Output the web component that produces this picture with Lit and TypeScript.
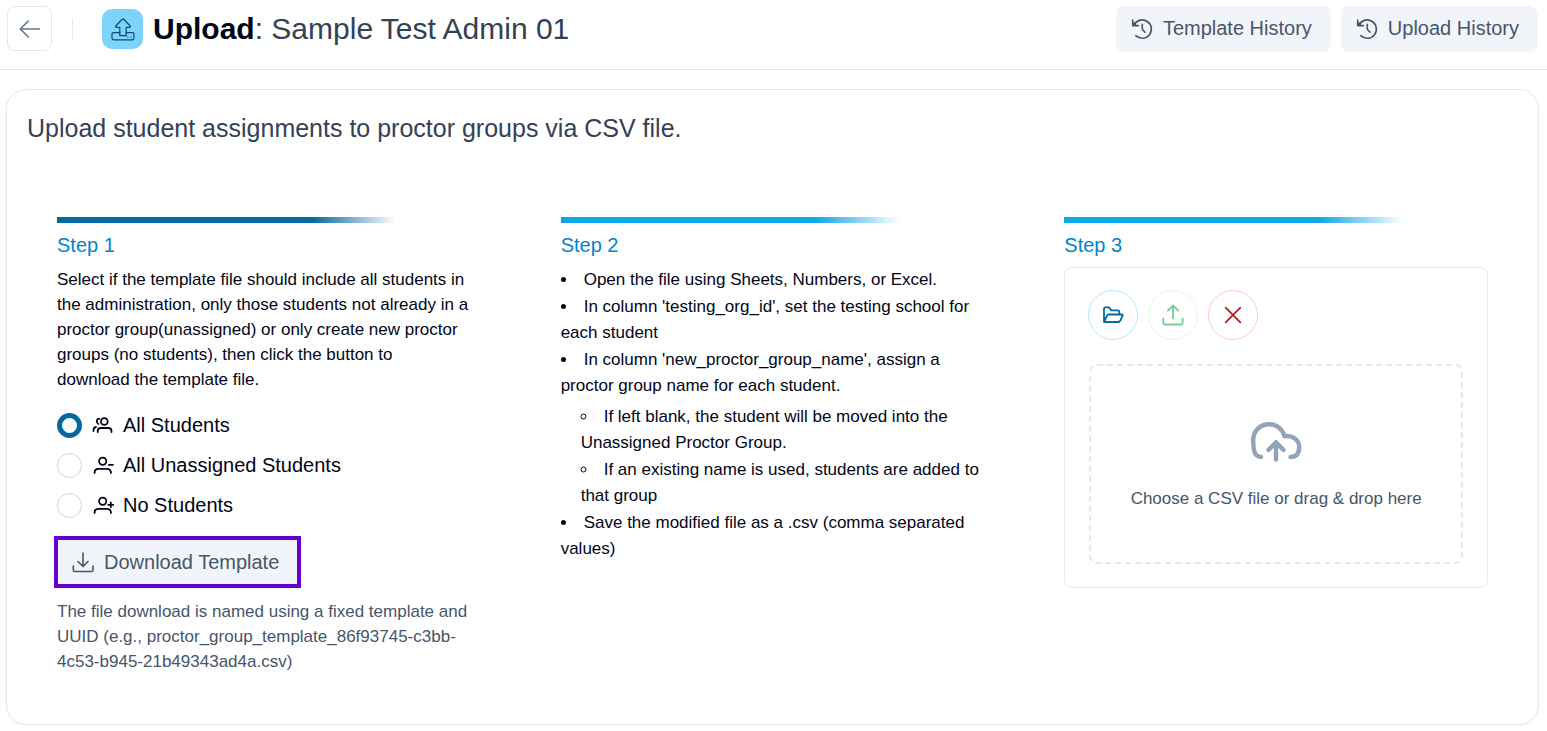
import { LitElement, html, css, svg } from "lit";
import { customElement, state } from "lit/decorators.js";

const icons = {
  back: svg`<svg width="22" height="20" viewBox="0 0 22 20"><path d="M20.300 10H1.500M9.300 2 1.300 10 9.300 18"/></svg>`,
  tray: svg`<svg width="24" height="24" viewBox="0 0 24 24"><path d="M8.800 18.700V10.300H5.300Q4 10 4.800 9L11 2.500Q12 1.500 13 2.500L19.200 9Q20 10 18.700 10.300H15.200V18.700Z"/><path d="M8.800 15.700H2.500Q1 15.700 1 17.200V21.300Q1 22.800 2.500 22.800H21.500Q23 22.800 23 21.300V17.200Q23 15.700 21.500 15.700H15.200"/><path d="M16.700 20h.4M20 20h.4"/></svg>`,
  history: svg`<svg width="22" height="22" viewBox="0 0 22 22"><path d="M3.200 6.500A9.200 9.200 0 1 1 4.800 17.700"/><path d="M1.700 2V7.600H7.500M2.200 7.200 4.500 4.800M1.800 4.500 4.500 7"/><path d="M11.300 6.200V11.200L14 14.200"/></svg>`,
  download: svg`<svg width="22" height="22" viewBox="0 0 22 22"><path d="M11 2V15M6 10.500 11 15.500 16 10.500M1.300 15V19Q1.300 20.500 2.800 20.500H19.500Q21 20.500 21 19V15"/></svg>`,
  upload: svg`<svg width="22" height="22" viewBox="0 0 22 22"><path d="M11 14.500V1.500M6 6.500 11 1.500 16 6.500M1.300 14.500V18.500Q1.300 20.500 3 20.500H19Q20.700 20.500 20.700 18.500V14.500"/></svg>`,
  folder: svg`<svg width="22" height="22" viewBox="0 0 22 22"><path d="M2 18V5.200Q2 3.400 3.500 3.400H6.300Q7.300 3.400 8 4.400L9.300 6.400H15.700Q17.300 6.400 17.300 8V10.500M2 18 5 11.700Q5.600 10.500 6.700 10.500H19.700Q21.200 10.500 20.600 11.700L18.200 16.800Q17.500 18 16.300 18Z"/></svg>`,
  close: svg`<svg width="18" height="18" viewBox="0 0 18 18"><path d="M1.700 1.700 16.300 16.300M16.300 1.700 1.700 16.300"/></svg>`,
  cloud: svg`<svg width="52" height="42" viewBox="0 0 52 42"><path d="M11 36C5 35.500 3.200 31 3.200 19C3.200 9.500 10.500 3.200 19 3.200C26.500 3.200 32.500 8 34.500 15.200C42.500 13.800 49.200 19 49.200 26C49.200 32.500 46.500 36 40.500 36"/><path d="M26 38.500V21.500M18.500 29 26 21.200 33.500 29"/></svg>`,
  all: svg`<svg width="22" height="20" viewBox="0 0 22 20"><circle cx="12.300" cy="6.500" r="3.400"/><path d="M5.700 17V16.300Q5.700 13 9 13H16.200Q19.500 13 19.500 16.300V17M7.300 3.800Q4.800 3.500 4.800 6.300 4.800 8.300 6.500 9M1.500 16V15.300Q1.500 12.500 4 12"/></svg>`,
  minus: svg`<svg width="22" height="20" viewBox="0 0 22 20"><circle cx="10.700" cy="6.300" r="3.600"/><path d="M2.600 18V17.200Q2.900 13.800 6.300 13.800H15Q18.500 13.800 18.900 17.200V18M16.800 9.800H21"/></svg>`,
  plus: svg`<svg width="22" height="20" viewBox="0 0 22 20"><circle cx="10.700" cy="6.300" r="3.600"/><path d="M2.600 18V17.200Q2.900 13.800 6.300 13.800H15Q18.500 13.800 18.900 17.200V18M16.300 9.800H21.300M18.800 7.300V12.300"/></svg>`,
};

const scopes = [
  { id: "all", label: "All Students", icon: icons.all },
  { id: "unassigned", label: "All Unassigned Students", icon: icons.minus },
  { id: "none", label: "No Students", icon: icons.plus },
];

@customElement("app-root")
export class AppRoot extends LitElement {
  @state() private scope = "all";

  static styles = css`
    :host {
      display: block;
      font-family: "Liberation Sans", Arial, sans-serif;
      font-size: 17px;
      line-height: 25px;
      color: #020617;
      background: #fff;
    }
    * { box-sizing: border-box; }
    h1, h2, p, ul { margin: 0; padding: 0; font-weight: 400; }
    button { font: inherit; cursor: pointer; }
    svg {
      display: block;
      flex: none;
      fill: none;
      stroke: currentColor;
      stroke-width: 1.600;
      stroke-linecap: round;
      stroke-linejoin: round;
    }
    .header {
      display: flex;
      align-items: center;
      height: 70px;
      padding: 0 9px 12px 7px;
      border-bottom: 1px solid #e2e8f0;
    }
    .back {
      display: grid;
      place-items: center;
      width: 45px;
      height: 45px;
      padding: 0;
      border: 1px solid #e2e8f0;
      border-radius: 8px;
      background: #fff;
      color: #64748b;
    }
    .divider { width: 1px; height: 20px; margin: 0 29px 0 20px; background: #e2e8f0; }
    .tile {
      display: grid;
      place-items: center;
      width: 41px;
      height: 40px;
      border-radius: 10px;
      background: #7dd3fc;
      color: #0c4a6e;
    }
    .tile svg { stroke-width: 1.200; }
    .title { flex: 1; margin-left: 10px; font-size: 30px; line-height: 40px; color: #334155; }
    .title strong { color: #020617; }
    .actions { display: flex; gap: 10px; }
    .soft {
      display: inline-flex;
      align-items: center;
      gap: 10px;
      height: 46px;
      padding: 0 19px 0 15px;
      border: 0;
      border-radius: 8px;
      background: #f1f5f9;
      color: #475569;
      font-size: 20px;
      white-space: nowrap;
    }
    .panel {
      margin: 19px 8px 0 6px;
      padding: 20px 20px 50px;
      border: 1px solid #e2e8f0;
      border-radius: 20px;
      box-shadow: 0 1px 2px rgb(0 0 0 / 5%);
    }
    .intro { font-size: 25px; line-height: 36px; color: #334155; }
    .steps {
      display: grid;
      grid-template-columns: repeat(3, minmax(0, 1fr));
      gap: 80px;
      padding: 71px 30px 0;
    }
    .bar { width: 80%; height: 6px; background: linear-gradient(to right, #0ea5e9 75%, transparent); }
    .bar.current { background: linear-gradient(to right, #0369a1 75%, transparent); }
    .step-name { margin: 7px 0; font-size: 20px; line-height: 30px; color: #0284c7; }
    .scopes { margin: 13px 0 0; padding: 0; border: 0; }
    .scope { display: flex; align-items: center; height: 40px; font-size: 20px; cursor: pointer; }
    .scope svg { margin: 0 9px 0 10px; stroke-width: 1.800; }
    .radio {
      appearance: none;
      width: 25px;
      height: 25px;
      margin: 0;
      border: 1px solid #cbd5e1;
      border-radius: 50%;
      background: #fff;
    }
    .radio:checked { border: 5px solid #0369a1; }
    .download { margin-top: 14px; outline: 4px solid #6600cc; outline-offset: -1px; border-radius: 0; }
    .note { margin-top: 14px; color: #475569; }
    .list { list-style: disc inside; line-height: 26px; }
    .list li + li { margin-top: 1px; }
    .sublist { list-style: circle inside; margin-top: 5px; padding-left: 20px; }
    .box { padding: 22px 24px 23px 23px; border: 1px solid #e2e8f0; border-radius: 8px; }
    .tools { display: flex; gap: 10px; margin-bottom: 24px; }
    .round {
      display: grid;
      place-items: center;
      width: 50px;
      height: 50px;
      padding: 0;
      border: 1px solid #bae6fd;
      border-radius: 50%;
      background: #fff;
      color: #0369a1;
    }
    .round svg { stroke-width: 1.800; }
    .round.send { border-color: #dcfce7; color: #7bcb98; }
    .round.clear { border-color: #fecaca; color: #b91c1c; }
    .drop {
      display: flex;
      flex-direction: column;
      align-items: center;
      justify-content: center;
      gap: 23px;
      height: 200px;
      margin-left: 1px;
      padding-top: 3px;
      border: 2px dashed #e2e8f0;
      border-radius: 8px;
      color: #475569;
      cursor: pointer;
    }
    .drop svg { color: #94a3b8; stroke-width: 4.400; }
  `;

  render() {
    return html`
      <header class="header">
        <button class="back" aria-label="Back">${icons.back}</button>
        <span class="divider"></span>
        <span class="tile">${icons.tray}</span>
        <h1 class="title"><strong>Upload</strong>: Sample Test Admin 01</h1>
        <div class="actions">
          <button class="soft">${icons.history}<span>Template History</span></button>
          <button class="soft">${icons.history}<span>Upload History</span></button>
        </div>
      </header>
      <main class="panel">
        <p class="intro">Upload student assignments to proctor groups via CSV file.</p>
        <div class="steps">
          <section>
            <div class="bar current"></div>
            <h2 class="step-name">Step 1</h2>
            <p>Select if the template file should include all students in the administration, only those students not already in a proctor group(unassigned) or only create new proctor groups (no students), then click the button to<br />download the template file.</p>
            <fieldset class="scopes" aria-label="Students to include">
              ${scopes.map((s) => html`
                <label class="scope">
                  <input class="radio" type="radio" name="scope" .value=${s.id}
                    .checked=${this.scope === s.id} @change=${() => (this.scope = s.id)} />
                  ${s.icon}<span>${s.label}</span>
                </label>`)}
            </fieldset>
            <button class="soft download">${icons.download}<span>Download Template</span></button>
            <p class="note">The file download is named using a fixed template and UUID (e.g., proctor_group_template_86f93745-c3bb-4c53-b945-21b49343ad4a.csv)</p>
          </section>
          <section>
            <div class="bar"></div>
            <h2 class="step-name">Step 2</h2>
            <ul class="list">
              <li>Open the file using Sheets, Numbers, or Excel.</li>
              <li>In column 'testing_org_id', set the testing school for each student</li>
              <li>In column 'new_proctor_group_name', assign a proctor group name for each student.
                <ul class="sublist">
                  <li>If left blank, the student will be moved into the Unassigned Proctor Group.</li>
                  <li>If an existing name is used, students are added to that group</li>
                </ul>
              </li>
              <li>Save the modified file as a .csv (comma separated values)</li>
            </ul>
          </section>
          <section>
            <div class="bar"></div>
            <h2 class="step-name">Step 3</h2>
            <div class="box">
              <div class="tools">
                <button class="round" aria-label="Choose file">${icons.folder}</button>
                <button class="round send" aria-label="Upload file">${icons.upload}</button>
                <button class="round clear" aria-label="Clear file">${icons.close}</button>
              </div>
              <label class="drop">
                ${icons.cloud}
                <span>Choose a CSV file or drag &amp; drop here</span>
                <input type="file" accept=".csv" hidden />
              </label>
            </div>
          </section>
        </div>
      </main>
    `;
  }
}
